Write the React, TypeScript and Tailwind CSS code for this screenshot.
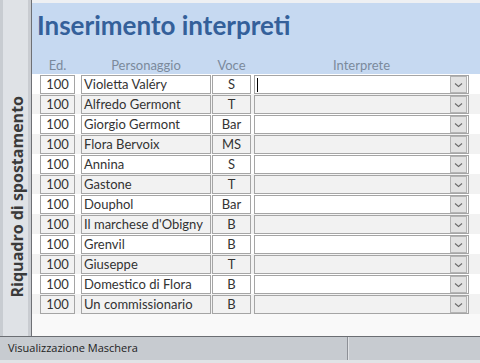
const rows = [
  { ed: 100, nome: 'Violetta Valéry', voce: 'S' },
  { ed: 100, nome: 'Alfredo Germont', voce: 'T' },
  { ed: 100, nome: 'Giorgio Germont', voce: 'Bar' },
  { ed: 100, nome: 'Flora Bervoix', voce: 'MS' },
  { ed: 100, nome: 'Annina', voce: 'S' },
  { ed: 100, nome: 'Gastone', voce: 'T' },
  { ed: 100, nome: 'Douphol', voce: 'Bar' },
  { ed: 100, nome: "Il marchese d'Obigny", voce: 'B' },
  { ed: 100, nome: 'Grenvil', voce: 'B' },
  { ed: 100, nome: 'Giuseppe', voce: 'T' },
  { ed: 100, nome: 'Domestico di Flora', voce: 'B' },
  { ed: 100, nome: 'Un commissionario', voce: 'B' },
];

function Chevron() {
  return (
    <svg width="9" height="6" viewBox="0 0 9 6" fill="none">
      <path d="M1 1.5 L4.5 4.5 L8 1.5" stroke="#6b6b6b" strokeWidth="1.1" />
    </svg>
  );
}

function Row({ ed, nome, voce, index }: { ed: number; nome: string; voce: string; index: number }) {
  const bg = index % 2 === 0 ? 'bg-white' : 'bg-[#f2f2f2]';
  return (
    <div className={`flex h-[20px] items-start pt-[1px] pl-[8px] ${bg}`}>
      <div className="flex h-[19px] w-[35px] items-center justify-center border border-[#a5a5a5]">{ed}</div>
      <div className="ml-[6px] flex h-[19px] w-[130px] items-center border border-[#a5a5a5] pl-[2px]">{nome}</div>
      <div className="ml-[1px] flex h-[19px] w-[39px] items-center justify-center border border-[#a5a5a5]">{voce}</div>
      <div className="ml-[3px] flex h-[19px] w-[215px] items-center border border-[#a5a5a5]">
        <div className="flex flex-1 items-center pl-[2px]">
          {index === 0 && <div className="h-[14px] w-[1px] bg-black" />}
        </div>
        <div className="mr-[1px] flex h-[17px] w-[17px] items-center justify-center border border-[#b4b4b4] bg-[#e2e2e2]">
          <Chevron />
        </div>
      </div>
    </div>
  );
}

export default function App() {
  return (
    <div className="flex h-[363px] w-[480px] flex-col overflow-hidden bg-[#e1e3e6] font-['Lato',sans-serif]">
      <div className="flex h-[336px]">
        <div className="flex w-[28px] border-l-[3px] border-[#c8ccd1] bg-[#dfe2e6]">
          <div className="flex flex-1 items-center justify-center pt-[58px] pl-[3px]">
            <span className="rotate-180 font-['Open_Sans',sans-serif] text-[16px] leading-[17px] font-bold text-[#3a3a3a] [writing-mode:vertical-rl]">
              Riquadro di spostamento
            </span>
          </div>
        </div>
        <div className="w-[3px] bg-[#c9ccd1]" />
        <div className="w-[1px] bg-[#6e7075]" />
        <div className="flex flex-1 flex-col bg-[#f9f9f9]">
          <div className="h-[3px] bg-[#eef0f3]" />
          <div className="flex h-[71px] flex-col bg-[#c6d9f1]">
            <h1 className="ml-[5px] mt-[7px] text-[26px] leading-[30px] font-bold text-[#34609a]">
              Inserimento interpreti
            </h1>
            <div className="mt-auto flex h-[16px] items-center pl-[8px] text-[13px] text-[#7b8a9c]">
              <div className="w-[35px] text-center">Ed.</div>
              <div className="ml-[6px] w-[130px] text-center">Personaggio</div>
              <div className="ml-[1px] w-[39px] text-center">Voce</div>
              <div className="ml-[3px] w-[215px] text-center">Interprete</div>
            </div>
          </div>
          <div className="text-[13px] text-[#333]">
            {rows.map((r, i) => (
              <Row key={i} index={i} {...r} />
            ))}
          </div>
        </div>
      </div>
      <div className="flex h-[24px] border-t border-[#6b6e73] bg-[#c7cbd0]">
        <div className="flex w-[347px] items-center pl-[8px] font-['Open_Sans',sans-serif] text-[11px] text-[#222]">
          Visualizzazione Maschera
        </div>
        <div className="w-[1px] bg-[#8d9096]" />
        <div className="w-[1px] bg-[#e0e2e5]" />
      </div>
      <div className="flex-1 bg-[#e1e3e6]" />
    </div>
  );
}
